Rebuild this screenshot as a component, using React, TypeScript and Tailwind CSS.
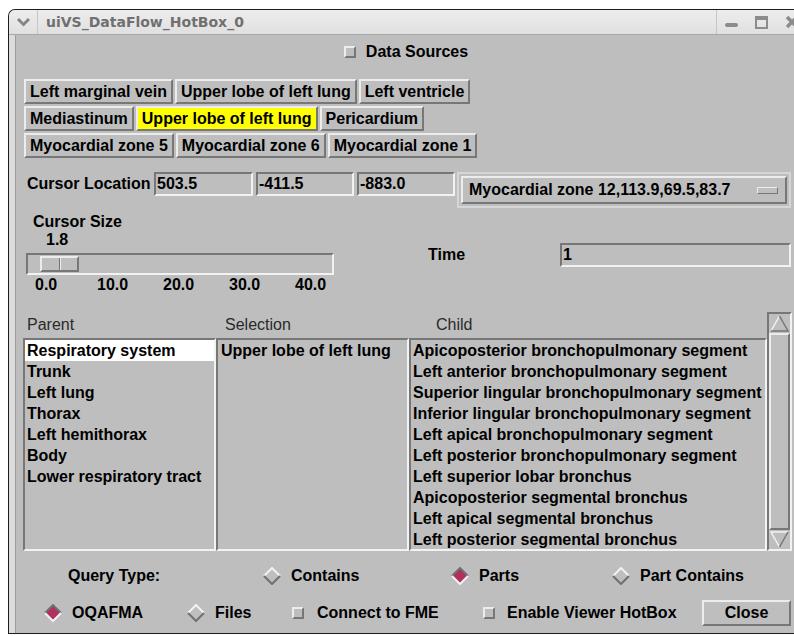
import React from "react";

// Motif-style bevels
const raised =
  "border-2 border-t-[#ececec] border-l-[#ececec] border-r-[#777777] border-b-[#777777]";
const sunken =
  "border-2 border-t-[#777777] border-l-[#777777] border-r-[#f2f2f2] border-b-[#f2f2f2]";

const shortcuts = [
  [
    { label: "Left marginal vein" },
    { label: "Upper lobe of left lung" },
    { label: "Left ventricle" },
  ],
  [
    { label: "Mediastinum" },
    { label: "Upper lobe of left lung", active: true },
    { label: "Pericardium" },
  ],
  [
    { label: "Myocardial zone 5" },
    { label: "Myocardial zone 6" },
    { label: "Myocardial zone 1" },
  ],
];

const parents = [
  "Respiratory system",
  "Trunk",
  "Left lung",
  "Thorax",
  "Left hemithorax",
  "Body",
  "Lower respiratory tract",
];

const children = [
  "Apicoposterior bronchopulmonary segment",
  "Left anterior bronchopulmonary segment",
  "Superior lingular bronchopulmonary segment",
  "Inferior lingular bronchopulmonary segment",
  "Left apical bronchopulmonary segment",
  "Left posterior bronchopulmonary segment",
  "Left superior lobar bronchus",
  "Apicoposterior segmental bronchus",
  "Left apical segmental bronchus",
  "Left posterior segmental bronchus",
];

const scale = ["0.0", "10.0", "20.0", "30.0", "40.0"];

function Diamond({ on }: { on?: boolean }) {
  return (
    <svg width="18" height="18" viewBox="0 0 18 18" className="shrink-0">
      <polygon points="9,1 17,9 9,17 1,9" fill={on ? "#b03060" : "#bebebe"} />
      <polyline
        points="1,9 9,1 17,9"
        fill="none"
        stroke={on ? "#707070" : "#f2f2f2"}
        strokeWidth="2"
      />
      <polyline
        points="1,9 9,17 17,9"
        fill="none"
        stroke={on ? "#f2f2f2" : "#707070"}
        strokeWidth="2"
      />
    </svg>
  );
}

function Radio({ label, on }: { label: string; on?: boolean }) {
  return (
    <div className="flex items-center">
      <Diamond on={on} />
      <span className="ml-[10px]">{label}</span>
    </div>
  );
}

function Toggle({ label, gap }: { label: string; gap: string }) {
  return (
    <div className="flex items-center">
      <span className={`block w-[12px] h-[12px] shrink-0 ${raised}`} />
      <span className={gap}>{label}</span>
    </div>
  );
}

function Field({ value, w }: { value: string; w: string }) {
  return (
    <div className={`${w} h-[24px] shrink-0 ${sunken} flex items-center pl-[1px]`}>
      {value}
    </div>
  );
}

function ScrollArrow({ up }: { up?: boolean }) {
  return (
    <svg width="21" height="19" viewBox="0 0 21 19" className="block">
      {up ? (
        <>
          <polygon points="10.5,2 19,17 2,17" fill="#bebebe" />
          <polyline points="2,17 10.5,2" fill="none" stroke="#f2f2f2" strokeWidth="1.5" />
          <polyline points="10.5,2 19,17 2,17" fill="none" stroke="#777777" strokeWidth="1.5" />
        </>
      ) : (
        <>
          <polygon points="2,2 19,2 10.5,17" fill="#bebebe" />
          <polyline points="10.5,17 2,2 19,2" fill="none" stroke="#f2f2f2" strokeWidth="1.5" />
          <polyline points="19,2 10.5,17" fill="none" stroke="#777777" strokeWidth="1.5" />
        </>
      )}
    </svg>
  );
}

export default function App() {
  return (
    <div className="w-[794px] h-[636px] bg-white overflow-hidden pt-[9px] pl-[8px] font-['Liberation_Sans',Arial,sans-serif] text-[16px] font-bold text-black">
      <div className="w-[800px] h-[625px] border-l border-t border-b border-[#1c1c1c] rounded-tl-[7px] flex flex-col bg-[#bebebe]">
        {/* title bar */}
        <div className="h-[25px] flex items-stretch bg-gradient-to-b from-[#ededed] to-[#e0e0e0] border-b border-[#a8a8a8] rounded-tl-[6px] shrink-0">
          <div className="w-[29px] flex items-center justify-center border-r border-[#c6c6c6]">
            <svg width="15" height="10" viewBox="0 0 15 10">
              <polyline points="2,2 7.5,7.5 13,2" fill="none" stroke="#858585" strokeWidth="3" />
            </svg>
          </div>
          <div className="w-[678px] flex items-center pl-[8px] font-['DejaVu_Sans',sans-serif] text-[14px] font-bold text-[#707070]">
            uiVS_DataFlow_HotBox_0
          </div>
          <div className="flex-1 flex items-center border-l border-[#c6c6c6] pl-[8px] gap-[17px]">
            <span className="block w-[13px] h-[4px] rounded-[2px] bg-[#8c8c8c] mt-[6px]" />
            <span className="block w-[13px] h-[13px] border-2 border-t-[4px] border-[#8c8c8c]" />
            <svg width="14" height="14" viewBox="0 0 14 14">
              <path d="M2 2 L12 12 M12 2 L2 12" stroke="#8c8c8c" strokeWidth="3.5" />
            </svg>
          </div>
        </div>

        <div className="flex-1 flex">
          {/* left frame strip */}
          <div className="w-[7px] bg-[#dcdcdc] border-r border-[#9c9c9c] shrink-0" />

          <div className="w-[780px] flex flex-col">
            <div className="h-[34px] flex items-center justify-center">
              <Toggle label="Data Sources" gap="ml-[10px]" />
            </div>

            <div className="mt-[10px] ml-[8px] flex flex-col gap-[2px]">
              {shortcuts.map((row, i) => (
                <div key={i} className="flex gap-[2px]">
                  {row.map((b) => (
                    <div
                      key={b.label}
                      className={`h-[25px] px-[4px] flex items-center whitespace-nowrap ${raised} ${
                        b.active ? "bg-[#ffff00]" : ""
                      }`}
                    >
                      {b.label}
                    </div>
                  ))}
                </div>
              ))}
            </div>

            {/* cursor location */}
            <div className="mt-[14px] ml-[11px] flex items-start">
              <div className="w-[127px] h-[24px] shrink-0 flex items-center whitespace-nowrap">Cursor Location</div>
              <Field value="503.5" w="w-[99px]" />
              <div className="w-[3px] shrink-0" />
              <Field value="-411.5" w="w-[98px]" />
              <div className="w-[3px] shrink-0" />
              <Field value="-883.0" w="w-[98px]" />
              <div className="ml-[2px] w-[334px] h-[36px] shrink-0 border-2 border-[#d6d6d6] p-[2px]">
                <div className={`h-full ${raised} flex items-center justify-between pl-[6px] pr-[7px]`}>
                  <span className="whitespace-nowrap">Myocardial zone 12,113.9,69.5,83.7</span>
                  <span className="block w-[21px] h-[7px] border border-t-[#ececec] border-l-[#ececec] border-r-[#777777] border-b-[#777777]" />
                </div>
              </div>
            </div>

            {/* cursor size + time */}
            <div className="flex">
              <div className="ml-[10px] w-[308px] shrink-0 flex flex-col">
                <div className="mt-[5px] pl-[7px] leading-[18px]">Cursor Size</div>
                <div className="pl-[20px] leading-[18px]">1.8</div>
                <div className={`mt-[4px] h-[22px] ${sunken} pl-[12px] pt-[1px]`}>
                  <div className={`w-[39px] h-[16px] ${raised} flex`}>
                    <span className="block w-[18px] h-full border-r border-[#777777]" />
                    <span className="block w-[1px] h-full bg-[#ececec]" />
                  </div>
                </div>
                <div className="mt-[1px] pl-[9px] flex leading-[18px]">
                  {scale.map((s, i) => (
                    <span key={s} className={`shrink-0 ${i === 0 ? "w-[62px]" : "w-[66px]"}`}>
                      {s}
                    </span>
                  ))}
                </div>
              </div>
              <div className="ml-[94px] mt-[35px] flex items-center h-[24px]">
                <span className="w-[132px] shrink-0">Time</span>
                <Field value="1" w="w-[231px]" />
              </div>
            </div>

            {/* parent / selection / child lists */}
            <div className="mt-[18px] ml-[7px] flex items-end">
              <div className="w-[193px] flex flex-col">
                <div className="h-[26px] flex items-center pl-[4px] font-normal text-[#2a2a2a]">Parent</div>
                <div className={`h-[213px] ${sunken} flex flex-col`}>
                  {parents.map((p, i) => (
                    <div
                      key={p}
                      className={`h-[21px] leading-[21px] pl-[2px] whitespace-nowrap ${i === 0 ? "bg-white" : ""}`}
                    >
                      {p}
                    </div>
                  ))}
                </div>
              </div>
              <div className="w-[193px] flex flex-col">
                <div className="h-[26px] flex items-center pl-[9px] font-normal text-[#2a2a2a]">Selection</div>
                <div className={`h-[213px] ${sunken} flex flex-col`}>
                  <div className="h-[21px] leading-[21px] pl-[3px] whitespace-nowrap">Upper lobe of left lung</div>
                </div>
              </div>
              <div className="w-[358px] flex flex-col">
                <div className="h-[26px] flex items-center pl-[27px] font-normal text-[#2a2a2a]">Child</div>
                <div className={`h-[213px] ${sunken} flex flex-col`}>
                  {children.map((c) => (
                    <div key={c} className="h-[21px] leading-[21px] pl-[2px] whitespace-nowrap">
                      {c}
                    </div>
                  ))}
                </div>
              </div>
              <div className={`w-[25px] h-[239px] ${sunken} flex flex-col`}>
                <ScrollArrow up />
                <div className={`flex-1 ${raised}`} />
                <ScrollArrow />
              </div>
            </div>

            {/* query type */}
            <div className="mt-[13px] ml-[52px] h-[24px] flex items-center">
              <span className="w-[195px] shrink-0">Query Type:</span>
              <div className="w-[188px] shrink-0">
                <Radio label="Contains" />
              </div>
              <div className="w-[161px] shrink-0">
                <Radio label="Parts" on />
              </div>
              <Radio label="Part Contains" />
            </div>

            {/* bottom controls */}
            <div className="mt-[12px] ml-[28px] h-[26px] flex items-center">
              <div className="w-[143px] shrink-0">
                <Radio label="OQAFMA" on />
              </div>
              <div className="w-[105px] shrink-0">
                <Radio label="Files" />
              </div>
              <div className="w-[191px] shrink-0">
                <Toggle label="Connect to FME" gap="ml-[13px]" />
              </div>
              <div className="w-[219px] shrink-0">
                <Toggle label="Enable Viewer HotBox" gap="ml-[12px]" />
              </div>
              <div className={`w-[89px] h-[26px] shrink-0 ${raised} flex items-center justify-center`}>Close</div>
            </div>
          </div>
        </div>
      </div>
    </div>
  );
}
